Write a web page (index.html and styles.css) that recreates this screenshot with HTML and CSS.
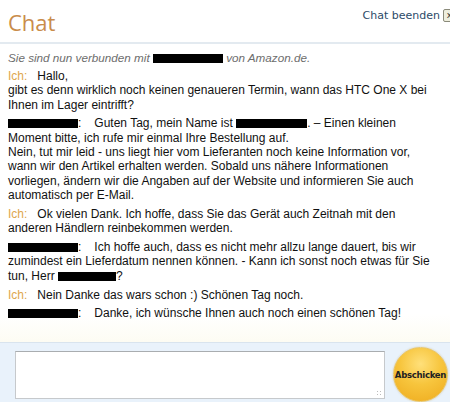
FILE: index.html
```html
<!DOCTYPE html>
<html>
<head>
<meta charset="utf-8">
<link rel="stylesheet" href="styles.css">
</head>
<body>
<div class="page">
  <header class="head">
    <h1 class="title">Chat</h1>
    <a class="end">Chat beenden <span class="end-icon">x</span></a>
  </header>
  <div class="log">
    <p class="status">Sie sind nun verbunden mit <span class="redact r-status"></span> von Amazon.de.</p>
    <div class="msg"><span class="me">Ich:</span><span class="gap"></span>Hallo,<br>gibt es denn wirklich noch keinen genaueren Termin, wann das HTC One X bei Ihnen im Lager eintrifft?</div>
    <div class="msg"><span class="redact r-name"></span>:<span class="gap2"></span>Guten Tag, mein Name ist <span class="redact r-mid"></span>. – Einen kleinen Moment bitte, ich rufe mir einmal Ihre Bestellung auf.<br>Nein, tut mir leid - uns liegt hier vom Lieferanten noch keine Information vor, wann wir den Artikel erhalten werden. Sobald uns nähere Informationen vorliegen, ändern wir die Angaben auf der Website und informieren Sie auch automatisch per E-Mail.</div>
    <div class="msg"><span class="me">Ich:</span><span class="gap"></span>Ok vielen Dank. Ich hoffe, dass Sie das Gerät auch Zeitnah mit den anderen Händlern reinbekommen werden.</div>
    <div class="msg"><span class="redact r-name"></span>:<span class="gap2"></span>Ich hoffe auch, dass es nicht mehr allzu lange dauert, bis wir zumindest ein Lieferdatum nennen können. - Kann ich sonst noch etwas für Sie tun, Herr <span class="redact r-herr"></span>?</div>
    <div class="msg"><span class="me">Ich:</span><span class="gap"></span>Nein Danke das wars schon :) Schönen Tag noch.</div>
    <div class="msg"><span class="redact r-name"></span>:<span class="gap2"></span>Danke, ich wünsche Ihnen auch noch einen schönen Tag!</div>
  </div>
  <div class="compose">
    <div class="input"><span class="grip"></span></div>
    <button class="send">Abschicken</button>
  </div>
</div>
</body>
</html>
```
FILE: styles.css
```css
html, body {
  margin: 0;
  padding: 0;
  background: #fff;
}
.page {
  width: 450px;
  height: 402px;
  overflow: hidden;
  display: grid;
  grid-template-rows: 44px 298px 60px;
  font-family: "Liberation Sans", Arial, sans-serif;
  font-size: 12px;
  color: #111;
}
.head {
  border-bottom: 2px solid #e3eaf0;
  display: flex;
  align-items: flex-start;
  justify-content: space-between;
  padding: 0 0 0 8px;
}
.title {
  margin: 7px 0 0 0;
  font-family: "Open Sans", sans-serif;
  font-weight: normal;
  font-size: 22px;
  color: #c98c4b;
  line-height: 30px;
}
.end {
  margin-top: 9px;
  margin-right: -6px;
  display: flex;
  align-items: center;
  gap: 3px;
  color: #2c4a68;
  font-family: "DejaVu Sans", sans-serif;
  font-size: 11px;
  white-space: nowrap;
}
.end-icon {
  display: inline-block;
  width: 11px;
  height: 11px;
  border: 1px solid #8a8a7a;
  border-radius: 2px;
  background: #eeeede;
  font-size: 9px;
  line-height: 10px;
  text-align: center;
  color: #333;
}
.log {
  padding: 7px 8px 0 8px;
  background: linear-gradient(to bottom, #fff 0, #fff 270px, #fdfcf3 298px);
}
.status {
  margin: 0 0 4px 0;
  font-style: italic;
  color: #6d6d6d;
  font-size: 11.7px;
  line-height: 14px;
}
.msg {
  line-height: 14.3px;
  margin-bottom: 4.6px;
}
.me {
  color: #dea74c;
}
.gap {
  display: inline-block;
  width: 10px;
}
.gap2 {
  display: inline-block;
  width: 13px;
}
.redact {
  display: inline-block;
  background: #000;
  height: 9px;
  vertical-align: -1px;
}
.r-status { width: 70px; }
.r-name { width: 70px; }
.r-mid { width: 71px; }
.r-herr { width: 58px; }
.compose {
  background: #e9f2fb;
  border-top: 1px solid #d9e4ee;
  display: flex;
  align-items: flex-start;
  padding: 8px 0 0 15px;
  gap: 8px;
}
.input {
  position: relative;
  width: 368px;
  height: 46px;
  background: #fff;
  border: 1px solid #c6c9cc;
  border-top-color: #a9adb0;
}
.grip {
  position: absolute;
  right: 2px;
  bottom: 2px;
  width: 6px;
  height: 6px;
  background: radial-gradient(circle, #bbb 0.8px, transparent 1px) 0 0 / 3px 3px;
}
.send {
  margin-top: -4px;
  width: 55px;
  height: 55px;
  border-radius: 50%;
  border: 1px solid #e9c66a;
  background: radial-gradient(circle at 50% 30%, #ffe07a 0%, #f7c53d 45%, #eeaa1c 100%);
  box-shadow: 0 0 2px rgba(180, 140, 40, 0.4);
  font-family: "DejaVu Sans Condensed", "DejaVu Sans", sans-serif;
  font-weight: bold;
  font-size: 9.5px;
  color: #222;
  padding: 0;
  letter-spacing: -0.3px;
}
```
